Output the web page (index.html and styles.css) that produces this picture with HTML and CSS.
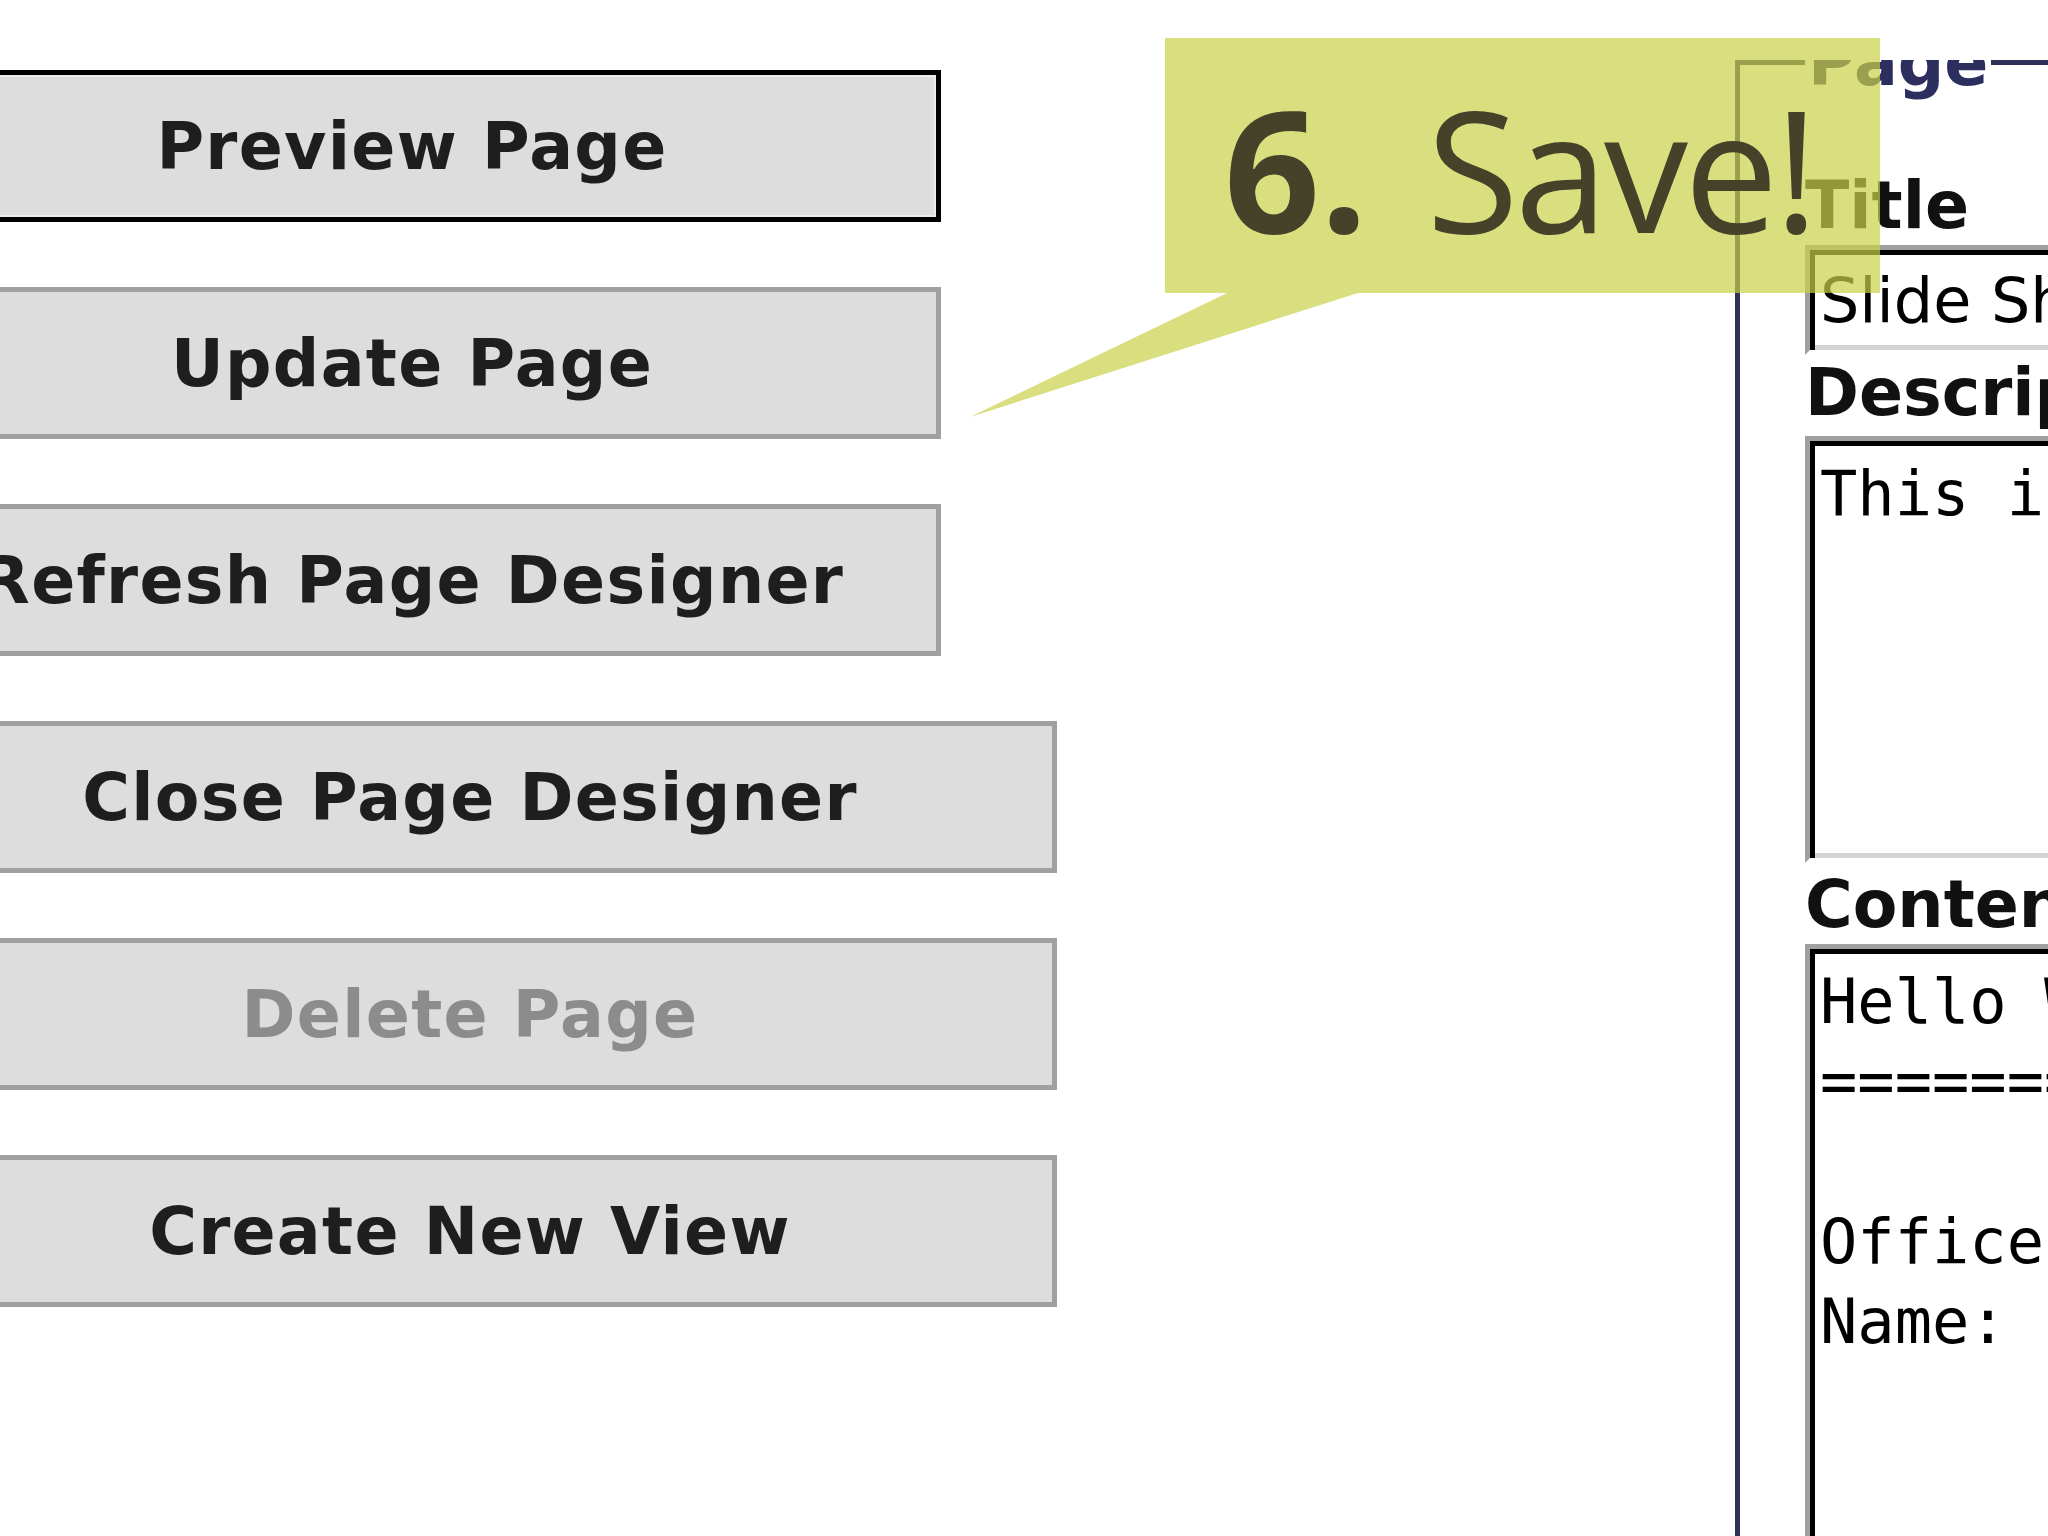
FILE: index.html
```
<!DOCTYPE html>
<html lang="en">
	<head>
		<meta charset="UTF-8" />
		<meta name="viewport" content="width=device-width, initial-scale=1.0" />
		<title>Page Designer</title>
		<link rel="stylesheet" href="styles.css">
	</head>
	<body>
		<div class="screen">
			<div class="actions">
				<button class="action action-focus" type="button">Preview Page</button>
				<button class="action" type="button">Update Page</button>
				<button class="action" type="button">Refresh Page Designer</button>
				<button class="action action-wide" type="button">Close Page Designer</button>
				<button class="action action-wide" type="button" disabled>Delete Page</button>
				<button class="action action-wide" type="button">Create New View</button>
			</div>
			<div class="panel">
				<fieldset class="page-form">
					<legend class="page-form-legend">Page</legend>
					<label class="field-label" for="title">Title</label>
					<input class="field-input" id="title" type="text" value="Slide Show Page" />
					<label class="field-label" for="description">Description</label>
					<textarea class="field-area field-area-short" id="description" wrap="off">This is a sample page.</textarea>
					<label class="field-label field-label-tight" for="content">Content</label>
					<textarea class="field-area field-area-long" id="content" wrap="off">Hello World
====================

Office Hours
Name:</textarea>
				</fieldset>
			</div>
			<div class="callout">
				<svg class="callout-shape" width="915" height="380" viewBox="0 0 915 380">
					<polygon points="200,0 915,0 915,255 393,255 5,379 262,255 200,255" />
				</svg>
				<div class="callout-text"><b>6.</b> <span class="callout-save">Save!</span></div>
			</div>
		</div>
	</body>
</html>
```

FILE: styles.css
```
*,
*::before,
*::after {
	box-sizing: border-box;
}
body {
	margin: 0;
	background-color: #ffffff;
	color: #111111;
	font-family: 'DejaVu Sans', sans-serif;
}
.screen {
	position: relative;
	display: flex;
	height: 1536px;
	overflow: hidden;
}
.actions {
	display: flex;
	flex-direction: column;
	align-items: flex-start;
	gap: 65px;
	margin-left: -117px;
	padding-top: 70px;
}
.action {
	width: 1058px;
	height: 152px;
	padding: 0;
	background-color: #dddddd;
	border: 5px solid #a0a0a0;
	color: #1e1e1e;
	font-family: 'DejaVu Sans', sans-serif;
	font-weight: bold;
	font-size: 65px;
	line-height: 75px;
	letter-spacing: 1.3px;
	white-space: nowrap;
}
.action-focus {
	border-color: #000000;
	box-shadow: inset 0 0 0 2px #ebebeb;
}
.action-wide {
	width: 1174px;
}
.action:disabled {
	color: #8c8c8c;
}
.panel {
	width: 313px;
	margin-left: auto;
	margin-top: 60px;
	overflow: hidden;
}
.page-form {
	width: 760px;
	margin: -35px 0 0 0;
	padding: 68px 0 0 65px;
	border: 5px solid #2e3158;
}
.page-form-legend {
	padding: 0 3px;
	color: #2c2f5e;
	font-weight: bold;
	font-size: 65px;
	line-height: 75px;
}
.field-label {
	display: block;
	font-weight: bold;
	font-size: 65px;
	line-height: 75px;
	white-space: nowrap;
}
.field-label-tight {
	margin-top: 4px;
}
.field-input,
.field-area {
	display: block;
	width: 620px;
	margin: 2px 0 0 0;
	background-color: #ffffff;
	color: #000000;
	border-style: solid;
	border-width: 5px;
	border-color: #a0a0a0 #ffffff #ffffff #a0a0a0;
	box-shadow: inset 5px 5px 0 0 #000000, inset -5px -5px 0 0 #d4d4d4;
	outline: none;
}
.field-input {
	height: 110px;
	padding: 0 10px;
	font-family: 'DejaVu Sans', sans-serif;
	font-size: 62px;
}
.field-area {
	padding: 13px 10px;
	font-family: 'DejaVu Sans Mono', monospace;
	font-size: 62px;
	line-height: 80px;
	resize: none;
	overflow: hidden;
	white-space: pre;
}
.field-area-short {
	height: 427px;
	margin-top: 6px;
}
.field-area-long {
	height: 700px;
}
.callout {
	position: absolute;
	left: 965px;
	top: 38px;
	width: 915px;
	height: 380px;
	pointer-events: none;
}
.callout-shape {
	position: absolute;
	top: 0;
	left: 0;
	fill: rgba(201, 208, 71, 0.7);
}
.callout-text {
	position: relative;
	margin-left: 200px;
	padding: 46px 0 0 59px;
	color: #45422a;
	font-family: 'Open Sans', sans-serif;
	font-size: 168px;
	line-height: 168px;
	white-space: nowrap;
}
.callout-save {
	margin-left: 15px;
	font-weight: 500;
	letter-spacing: -4px;
}
```
